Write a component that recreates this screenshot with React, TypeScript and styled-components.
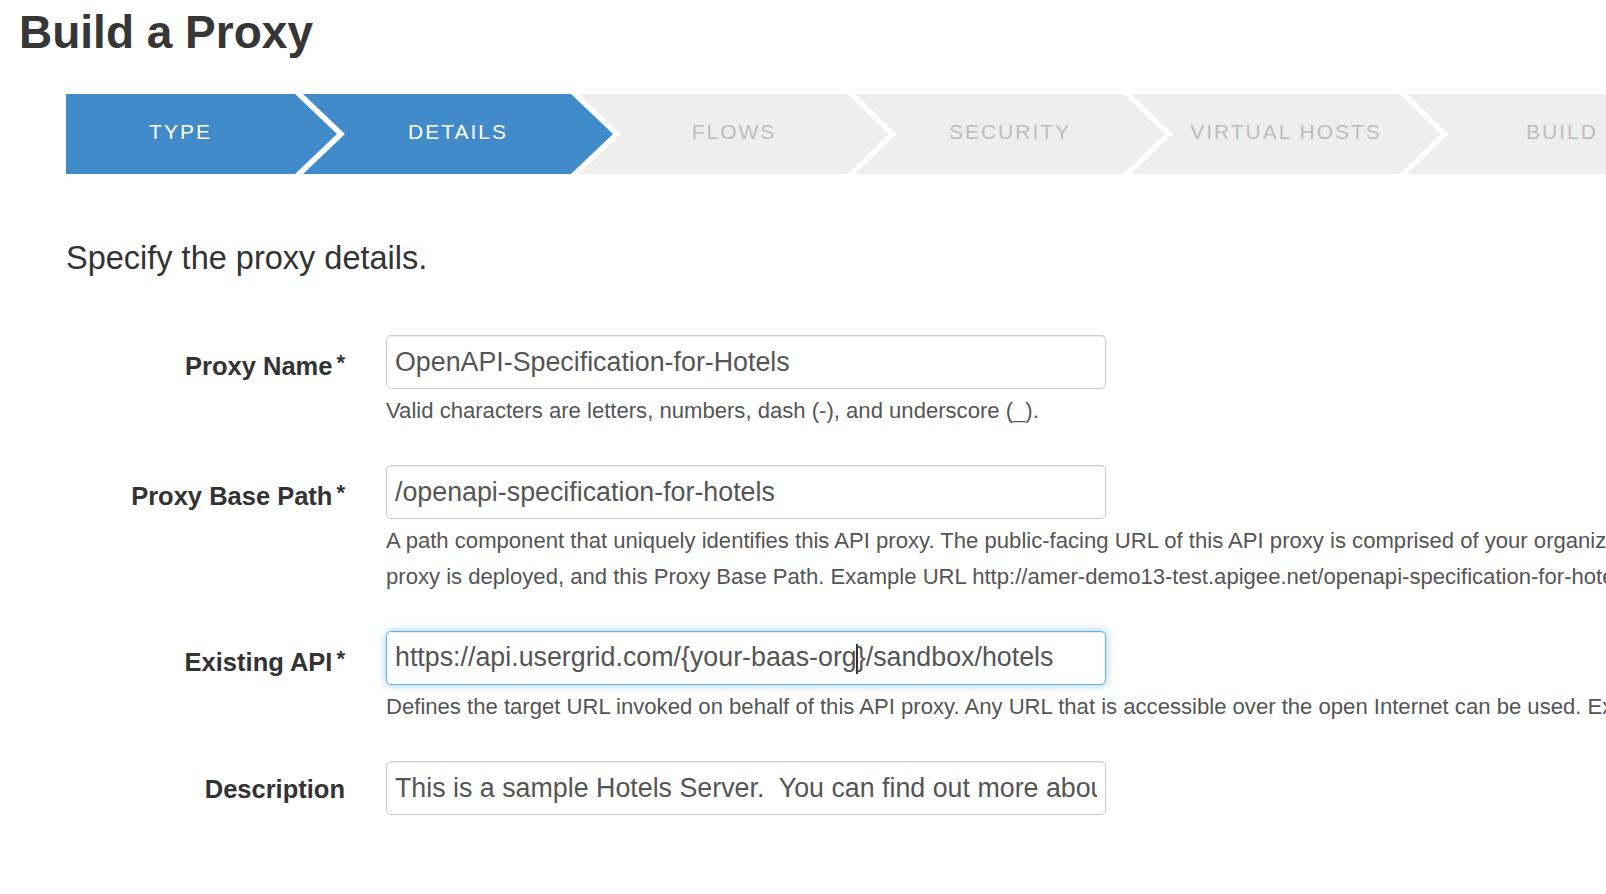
import React from "react";
import styled, { createGlobalStyle, css } from "styled-components";

const GlobalStyle = createGlobalStyle`
  html, body {
    margin: 0;
    padding: 0;
    background: #ffffff;
    overflow: hidden;
  }
  body {
    font-family: "Liberation Sans", "Helvetica Neue", Arial, sans-serif;
    color: #333333;
  }
  * { box-sizing: border-box; }
`;

const Page = styled.div`
  width: 1606px;
  height: 894px;
  overflow: hidden;
  padding: 6px 0 0 19px;
`;

const Title = styled.h1`
  margin: 0;
  font-size: 46px;
  line-height: 52px;
  font-weight: 700;
  color: #363636;
`;

const Wizard = styled.div`
  margin: 36px 0 0 47px;
`;

const Steps = styled.div`
  display: flex;
  height: 80px;
`;

const Step = styled.div<{ $active?: boolean; $first?: boolean }>`
  flex-shrink: 0;
  height: 80px;
  display: flex;
  align-items: center;
  justify-content: center;
  padding-bottom: 4px;
  font-size: 21px;
  letter-spacing: 2px;
  text-transform: uppercase;
  white-space: nowrap;
  background: ${(p) => (p.$active ? "#428bca" : "#eeeeee")};
  color: ${(p) => (p.$active ? "#ffffff" : "#bdbdbd")};
  ${(p) =>
    p.$first
      ? css`
          width: 271px;
          padding-right: 42px;
          clip-path: polygon(0 0, calc(100% - 42px) 0, 100% 50%, calc(100% - 42px) 100%, 0 100%);
        `
      : css`
          width: 310px;
          margin-left: -34px;
          padding-left: 42px;
          padding-right: 42px;
          clip-path: polygon(0 0, calc(100% - 42px) 0, 100% 50%, calc(100% - 42px) 100%, 0 100%, 42px 50%);
        `}
`;

const Subheading = styled.h2`
  margin: 64px 0 0;
  font-size: 32.5px;
  line-height: 40px;
  font-weight: 400;
  color: #333333;
`;

const Form = styled.div`
  margin-top: 57px;
`;

const FormRow = styled.div`
  display: grid;
  grid-template-columns: 279px 720px;
  column-gap: 41px;
  margin-bottom: 36px;
`;

const Label = styled.div`
  text-align: right;
  font-size: 25.5px;
  line-height: 56px;
  font-weight: 700;
  color: #333333;
  white-space: nowrap;
`;

const Required = styled.span`
  font-size: 22px;
  margin-left: 4px;
  vertical-align: 5px;
`;

const FieldCell = styled.div`
  display: flex;
  flex-direction: column;
`;

const Field = styled.div<{ $focused?: boolean }>`
  display: flex;
  align-items: center;
  width: 720px;
  height: 54px;
  padding: 0 8px;
  border: 1px solid ${(p) => (p.$focused ? "#66afe9" : "#cccccc")};
  border-radius: 5px;
  background: #ffffff;
  font-size: 26.8px;
  color: #555555;
  box-shadow: ${(p) =>
    p.$focused
      ? "inset 0 1px 1px rgba(0,0,0,.075), 0 0 8px rgba(102,175,233,.7)"
      : "inset 0 1px 1px rgba(0,0,0,.075)"};
`;

const Value = styled.span`
  flex: 1;
  min-width: 0;
  overflow: hidden;
  white-space: pre;
`;

const Caret = styled.span`
  display: inline-block;
  width: 2px;
  height: 30px;
  margin: 0 -1px;
  background: #333333;
  vertical-align: middle;
`;

const Help = styled.div`
  margin-top: 4px;
  font-size: 22.1px;
  line-height: 36px;
  color: #555555;
  white-space: nowrap;
`;

const steps = ["Type", "Details", "Flows", "Security", "Virtual Hosts", "Build"];
const activeCount = 2;

export default function App() {
  return (
    <>
      <GlobalStyle />
      <Page>
        <Title>Build a Proxy</Title>
        <Wizard>
          <Steps>
            {steps.map((s, i) => (
              <Step key={s} $first={i === 0} $active={i < activeCount}>
                {s}
              </Step>
            ))}
          </Steps>

          <Subheading>Specify the proxy details.</Subheading>

          <Form>
            <FormRow>
              <Label>
                Proxy Name<Required>*</Required>
              </Label>
              <FieldCell>
                <Field>
                  <Value>OpenAPI-Specification-for-Hotels</Value>
                </Field>
                <Help>Valid characters are letters, numbers, dash (-), and underscore (_).</Help>
              </FieldCell>
            </FormRow>

            <FormRow>
              <Label>
                Proxy Base Path<Required>*</Required>
              </Label>
              <FieldCell>
                <Field>
                  <Value>/openapi-specification-for-hotels</Value>
                </Field>
                <Help>
                  A path component that uniquely identifies this API proxy. The public-facing URL of this API proxy is comprised of your organization name, an environment where this API
                  <br />
                  proxy is deployed, and this Proxy Base Path. Example URL http://amer-demo13-test.apigee.net/openapi-specification-for-hotels
                </Help>
              </FieldCell>
            </FormRow>

            <FormRow>
              <Label>
                Existing API<Required>*</Required>
              </Label>
              <FieldCell>
                <Field $focused>
                  <Value>
                    https://api.usergrid.com/{"{"}your-baas-org
                    <Caret />
                    {"}"}/sandbox/hotels
                  </Value>
                </Field>
                <Help>
                  Defines the target URL invoked on behalf of this API proxy. Any URL that is accessible over the open Internet can be used. Example: http://mocktarget.apigee.net
                </Help>
              </FieldCell>
            </FormRow>

            <FormRow>
              <Label>Description</Label>
              <FieldCell>
                <Field>
                  <Value>{"This is a sample Hotels Server.  You can find out more about Swagger at http://swagger.io"}</Value>
                </Field>
              </FieldCell>
            </FormRow>
          </Form>
        </Wizard>
      </Page>
    </>
  );
}
